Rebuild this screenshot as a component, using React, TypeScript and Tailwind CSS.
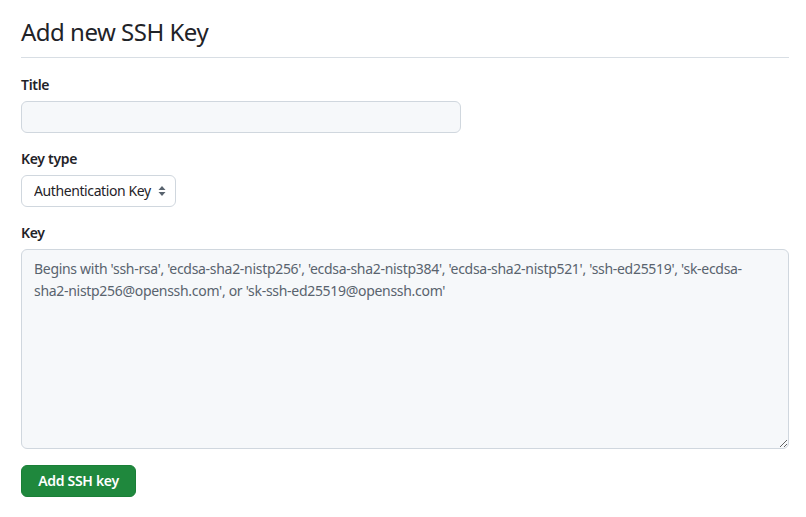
import { useState } from 'react';

const PLACEHOLDER =
  "Begins with 'ssh-rsa', 'ecdsa-sha2-nistp256', 'ecdsa-sha2-nistp384', 'ecdsa-sha2-nistp521', 'ssh-ed25519', 'sk-ecdsa-sha2-nistp256@openssh.com', or 'sk-ssh-ed25519@openssh.com'";

function SortIcon() {
  return (
    <svg width="8" height="12" viewBox="0 0 8 12" className="fill-[#59636e]">
      <path d="M4 1 L7.5 5 H0.5 Z" />
      <path d="M4 11 L7.5 7 H0.5 Z" />
    </svg>
  );
}

export default function App() {
  const [title, setTitle] = useState('');
  const [key, setKey] = useState('');

  return (
    <div className="min-h-screen bg-white text-[#1f2328] font-['Noto_Sans',sans-serif] tracking-[-0.3px]">
      <div className="pl-[21px] pr-[17px] pt-[14px]">
        <h1 className="text-[24px] font-normal leading-[36px] pb-[7px] tracking-[-0.5px] border-b border-[#d8dee4]">
          Add new SSH Key
        </h1>

        <form className="pt-[17px]" onSubmit={e => e.preventDefault()}>
          <label className="block text-sm font-semibold leading-5 mb-[6px]">Title</label>
          <input
            value={title}
            onChange={e => setTitle(e.target.value)}
            className="block w-[440px] h-8 px-3 text-sm rounded-md border border-[#d0d7de] bg-[#f6f8fa] outline-none"
          />

          <label className="block text-sm font-semibold leading-5 mt-4 mb-[6px]">Key type</label>
          <div className="relative w-[155px]">
            <select className="appearance-none block w-full h-8 pl-3 pr-[14px] text-sm tracking-[-0.4px] rounded-md border border-[#d0d7de] bg-white outline-none">
              <option>Authentication Key</option>
              <option>Signing Key</option>
            </select>
            <span className="pointer-events-none absolute right-[10px] top-[10px]">
              <SortIcon />
            </span>
          </div>

          <label className="block text-sm font-semibold leading-5 mt-4 mb-[6px]">Key</label>
          <textarea
            value={key}
            onChange={e => setKey(e.target.value)}
            placeholder={PLACEHOLDER}
            className="block w-full h-[200px] px-3 py-[8px] text-sm leading-[22px] rounded-md border border-[#d0d7de] bg-[#f6f8fa] outline-none placeholder:text-[#59636e]"
          />

          <button
            type="submit"
            className="mt-4 h-8 w-[115px] rounded-md bg-[#1f883d] border border-[#1a7f37] text-white text-sm font-semibold"
          >
            Add SSH key
          </button>
        </form>
      </div>
    </div>
  );
}
